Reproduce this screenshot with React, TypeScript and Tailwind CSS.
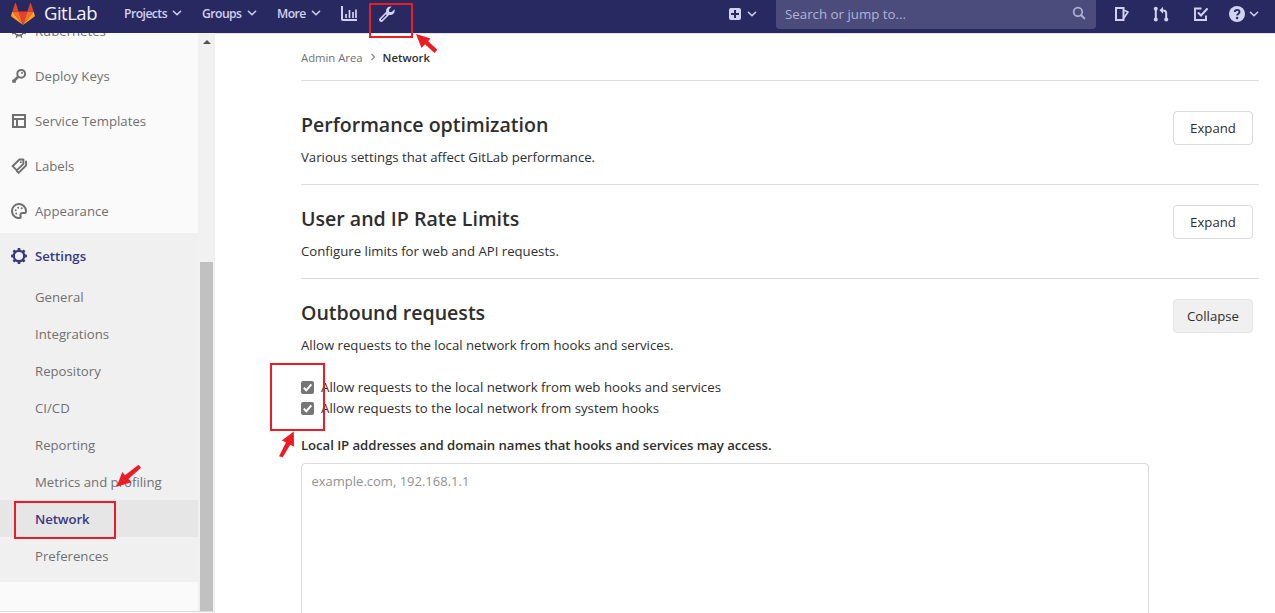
import type { ReactNode } from 'react';

type IconProps = { className?: string; size?: number; children: ReactNode };

function Icon({ className = '', size = 16, children }: IconProps) {
  return (
    <svg
      viewBox="0 0 16 16"
      width={size}
      height={size}
      fill="none"
      stroke="currentColor"
      strokeWidth="2"
      className={`block shrink-0 ${className}`}
    >
      {children}
    </svg>
  );
}

const Chevron = () => (
  <svg viewBox="0 0 10 8" width="10" height="8" className="block shrink-0" fill="none" stroke="currentColor" strokeWidth="1.5" strokeLinecap="round" strokeLinejoin="round">
    <path d="M1.4 2.2 5 5.8l3.6-3.6" />
  </svg>
);

const teeth = [0, 45, 90, 135, 180, 225, 270, 315];

const GearIcon = () => (
  <Icon>
    <circle cx="8" cy="8" r="5.2" strokeWidth="2.3" />
    {teeth.map((a) => (
      <rect key={a} x="6.6" y="0.1" width="2.8" height="2.6" rx="0.6" fill="currentColor" stroke="none" transform={`rotate(${a} 8 8)`} />
    ))}
  </Icon>
);

const WheelIcon = () => (
  <Icon>
    <circle cx="8" cy="8" r="4.5" strokeWidth="1.8" />
    <circle cx="8" cy="8" r="1.6" fill="currentColor" stroke="none" />
    {teeth.map((a) => (
      <path key={a} d="M8 .6v4" strokeWidth="1.4" transform={`rotate(${a + 22.5} 8 8)`} />
    ))}
  </Icon>
);

const KeyIcon = () => (
  <Icon>
    <circle cx="10.2" cy="5.8" r="3.9" />
    <path d="M7.2 8.8 2.4 13.4" strokeWidth="2.6" />
    <path d="M2.2 11.8v3M2 13.800h2.800" />
    <circle cx="11" cy="4.900" r="1" fill="currentColor" stroke="none" />
  </Icon>
);

const TemplateIcon = () => (
  <Icon>
    <path d="M2 2h12v12H2zM2 6h12M6 6v8" />
  </Icon>
);

const LabelsIcon = () => (
  <Icon>
    <path d="M8.400 1.500h4v4.300l-6.600 6.600-4.200-4.200zM15 2.800v4.700L7.600 14.900l-2.200-2.300" strokeWidth="1.900" strokeLinejoin="round" />
    <circle cx="9.800" cy="4.200" r="1" fill="currentColor" stroke="none" />
  </Icon>
);

const AppearanceIcon = () => (
  <Icon>
    <path d="M15 8A7 7 0 1 0 8.8 15c1 0 1-1 .7-1.800-.5-1.600.3-3.200 2-3.200H14c.7 0 1-1 1-2z" strokeWidth="2" />
    <g fill="currentColor" stroke="none">
      <circle cx="7.200" cy="4.700" r="1" />
      <circle cx="10.600" cy="5.300" r="1" />
      <circle cx="4.700" cy="7.300" r="1" />
      <circle cx="5.300" cy="10.400" r="1" />
    </g>
  </Icon>
);

const Tanuki = () => (
  <svg viewBox="0 0 24 24" width="24" height="24" className="block shrink-0">
    <path fill="#e24329" d="m12 23 4.400-13.500H7.600z" />
    <path fill="#fc6d26" d="M12 23 7.600 9.500H1.400zM12 23l4.400-13.500h6.200z" />
    <path fill="#fca326" d="M1.400 9.500.1 13.600c-.1.400 0 .8.300 1L12 23zM22.600 9.500l1.300 4.100c.1.400 0 .8-.3 1L12 23z" />
    <path fill="#e24329" d="M1.400 9.500h6.200L4.900 1.300c-.1-.4-.7-.4-.8 0zM22.600 9.500h-6.200l2.700-8.200c.1-.4.7-.4.8 0z" />
  </svg>
);

const navItems = [
  { label: 'Projects', cls: 'w-[78px]' },
  { label: 'Groups', cls: 'w-[75px]' },
  { label: 'More', cls: 'w-[63px]' },
];

function Navbar() {
  return (
    <header className="flex h-[33px] shrink-0 items-start bg-[#292961] text-[#d1d1f0]">
      <div className="flex h-[27px] w-full items-center">
        <div className="ml-[11px] flex w-[113px] items-center">
          <Tanuki />
          <span className="ml-[9px] text-[18.500px] leading-6 tracking-[-0.500px] text-[#f3f3fb] -mt-[2px]">GitLab</span>
        </div>
        {navItems.map((n) => (
          <button key={n.label} className={`flex items-center gap-[5px] text-[12.200px] font-semibold tracking-[-0.550px] ${n.cls}`}>
            <span className="pt-[2px]">{n.label}</span>
            <Chevron />
          </button>
        ))}
        <Icon className="ml-px">
          <path d="M1 0v13.200c0 .5.3.8.8.8H16" strokeWidth="2" />
          <path d="M5 8v4M8.500 4v8M12 6v6M15 3.500V12" strokeWidth="1.700" />
        </Icon>
        <Icon className="ml-[22px]">
          <path d="m2.300 13.700 6.200-6.200" strokeWidth="4.400" strokeLinecap="round" />
          <path d="m2.600 13.400 4.400-4.400" stroke="#292961" strokeWidth="1.100" strokeLinecap="round" />
          <path d="M12.600.6 10.100 3.300v2.600h2.600l2.900-2.700c.7 3.800-2 6.300-5.300 5.700L7.200 5.800C6.500 2.800 8.900-.1 12.600.6z" fill="currentColor" stroke="none" />
        </Icon>
        <div className="ml-[334px] flex items-center gap-[6px]">
          <svg viewBox="0 0 12 12" width="12" height="12" className="block">
            <rect width="12" height="12" rx="2" fill="currentColor" />
            <path d="M6 2v8M2 6h8" stroke="#292961" strokeWidth="2" />
          </svg>
          <Chevron />
        </div>
        <div className="-mb-[2px] ml-[19px] flex h-[29px] w-[320px] items-center justify-between self-end rounded-b bg-[#4b4b7c] pr-[10px] pl-[9px] text-[13.300px] text-[#b4b4d6]">
          <span>Search or jump to...</span>
          <Icon size={14} className="-mt-[3px] text-[#b1b1d3]">
            <circle cx="6.800" cy="6.800" r="4.900" />
            <path d="m10.500 10.500 3.600 3.600" strokeWidth="2.300" strokeLinecap="round" />
          </Icon>
        </div>
        <Icon className="ml-[18px]">
          <path d="M2 2h7.500v12H2z" />
          <path d="M10 4.300 14 6l-4.200 6" strokeWidth="1.700" strokeLinejoin="round" />
        </Icon>
        <Icon className="ml-[23px]">
          <path d="M2.800 3v10M13.200 13V7.500c0-2-1-3-3-3H8.500" />
          <path d="M10 .8v7L6.500 4.300z" fill="currentColor" stroke="none" />
          <g fill="currentColor" stroke="none">
            <circle cx="2.800" cy="2.800" r="2" />
            <circle cx="2.800" cy="13.400" r="2" />
            <circle cx="13.200" cy="13.400" r="2" />
          </g>
        </Icon>
        <Icon className="ml-[24px]">
          <path d="M8.500 2.500H2V14h11V9.500" strokeWidth="1.900" />
          <path d="m5.500 7 2.500 2.500 6-6.500" strokeLinecap="round" />
        </Icon>
        <svg viewBox="0 0 16 16" width="16" height="16" className="ml-[20px] block">
          <circle cx="8" cy="8" r="8" fill="currentColor" />
          <path d="M5.700 6.100c0-3 4.800-2.800 4.800 0 0 1.700-2.300 1.500-2.300 3.300" fill="none" stroke="#292961" strokeWidth="1.900" />
          <circle cx="8.100" cy="12" r="1.200" fill="#292961" />
        </svg>
        <div className="ml-[4px]">
          <Chevron />
        </div>
      </div>
    </header>
  );
}

const mainItems = [
  { label: 'Kubernetes', icon: <WheelIcon /> },
  { label: 'Deploy Keys', icon: <KeyIcon /> },
  { label: 'Service Templates', icon: <TemplateIcon /> },
  { label: 'Labels', icon: <LabelsIcon /> },
  { label: 'Appearance', icon: <AppearanceIcon /> },
];

const subItems = ['General', 'Integrations', 'Repository', 'CI/CD', 'Reporting', 'Metrics and profiling', 'Network', 'Preferences'];

function Sidebar() {
  return (
    <div className="flex h-[580px] w-[215px] shrink-0 overflow-hidden bg-[#fafafa]">
      <nav className="flex h-[579px] w-[198px] flex-col overflow-hidden border-b border-[#dbdbdb] text-[13.200px] text-[#707070]">
        <div className="-mt-[25px]">
          {mainItems.map((m) => (
            <a key={m.label} className="flex h-[45px] items-center gap-2 pl-[11px]">
              {m.icon}
              <span className="pt-[2px]">{m.label}</span>
            </a>
          ))}
        </div>
        <div className="h-[349px] shrink-0 bg-[#f0f0f0]">
          <a className="flex h-[45px] items-center gap-2 pl-[11px] font-semibold tracking-[0px] text-[#393982]">
            <GearIcon />
            <span className="pt-[2px]">Settings</span>
          </a>
          {subItems.map((s) => (
            <a
              key={s}
              className={
                s === 'Network'
                  ? 'flex h-[37px] items-center bg-[#e6e6e6] pt-[2px] pl-[35px] font-semibold tracking-[-0.100px] text-[#393982]'
                  : 'flex h-[37px] items-center pt-[2px] pl-[35px]'
              }
            >
              {s}
            </a>
          ))}
        </div>
      </nav>
      <div className="flex h-[579px] w-[17px] flex-col items-center border-b border-[#dbdbdb] bg-[#f1f1f1]">
        <svg viewBox="0 0 8 4" width="8" height="4" className="mt-[7px] block">
          <path d="M0 4 4 0l4 4z" fill="#505050" />
        </svg>
        <div className="mt-auto h-[349px] w-[13px] bg-[#c1c1c1]" />
      </div>
    </div>
  );
}

function SectionHeader({ title, text, action }: { title: string; text: string; action: 'Expand' | 'Collapse' }) {
  return (
    <div className="flex justify-between pr-[6px]">
      <div>
        <h4 className="text-[19.600px] leading-7 font-semibold tracking-[-0.020px]">{title}</h4>
        <p className="mt-2 text-[13.200px] leading-5">{text}</p>
      </div>
      <button
        className={
          action === 'Collapse'
            ? 'h-[34px] w-[80px] rounded border border-[#e3e3e3] bg-[#f0f0f0] pt-[2px] text-[13.200px]'
            : 'h-[34px] w-[80px] rounded border border-[#dbdbdb] bg-white pt-[2px] text-[13.200px]'
        }
      >
        {action}
      </button>
    </div>
  );
}

function Check({ label }: { label: string }) {
  return (
    <label className="flex h-[21px] items-center gap-[7px] text-[13.250px]">
      <svg viewBox="0 0 13 13" width="13" height="13" className="block">
        <rect width="13" height="13" rx="2" fill="#767676" />
        <path d="m2.800 6.800 2.500 2.500 5-6" fill="none" stroke="#fff" strokeWidth="2" />
      </svg>
      {label}
    </label>
  );
}

function Annotations() {
  return (
    <>
      <div className="absolute top-[3px] left-[369px] h-[35px] w-[44px] border-2 border-[#ed1c24]" />
      <div className="absolute top-[363px] left-[270px] h-[68px] w-[55px] border-2 border-[#ed1c24]" />
      <div className="absolute top-[501px] left-[14px] h-[38px] w-[102px] border-2 border-[#ed1c24]" />
      <svg viewBox="0 0 24 22" width="24" height="22" className="absolute top-[33px] left-[415px]">
        <path d="M1 1 15.500 5.500 13.200 8.200 22.300 16.800 19.500 20 10 11.300 6.500 15z" fill="#ed1c24" />
      </svg>
      <svg viewBox="0 0 18 28" width="18" height="28" className="absolute top-[431px] left-[278px]">
        <path d="M15.800.5 16 15.800 12.200 13.700 4.800 26.200 1 25.200 8 11.300 3.800 9.500z" fill="#ed1c24" />
      </svg>
      <svg viewBox="0 0 26 24" width="26" height="24" className="absolute top-[464px] left-[116px]">
        <path d="M.5 22.800 6.300 8 9 11.200 22.500.8 25 3.700 12.500 15 15.500 18.300z" fill="#ed1c24" />
      </svg>
    </>
  );
}

export default function App() {
  return (
    <div className="relative flex h-[613px] w-[1275px] flex-col overflow-hidden bg-white font-['Open_Sans',sans-serif] text-[#2e2e2e]">
      <Navbar />
      <div className="flex min-h-0 flex-1">
        <Sidebar />
        <main className="flex-1 overflow-hidden border-t border-[#e3e3ec] pr-[16px] pl-[86px]">
          <div className="flex h-[47px] items-center border-b border-[#dbdbdb] text-[11.300px]">
            <span className="pt-[2px] text-[#707070]">Admin Area</span>
            <svg viewBox="0 0 6 8" width="6" height="8" className="mx-[7px] block" fill="none" stroke="#8a8a8a" strokeWidth="1.200">
              <path d="m1.500 1 3 3-3 3" />
            </svg>
            <span className="pt-[2px] font-semibold">Network</span>
          </div>
          <section className="h-[104px] border-b border-[#dbdbdb] pt-[30px]">
            <SectionHeader title="Performance optimization" text="Various settings that affect GitLab performance." action="Expand" />
          </section>
          <section className="h-[94px] border-b border-[#dbdbdb] pt-5">
            <SectionHeader title="User and IP Rate Limits" text="Configure limits for web and API requests." action="Expand" />
          </section>
          <section className="pt-5">
            <SectionHeader title="Outbound requests" text="Allow requests to the local network from hooks and services." action="Collapse" />
            <div className="mt-[22px]">
              <Check label="Allow requests to the local network from web hooks and services" />
              <Check label="Allow requests to the local network from system hooks" />
            </div>
            <p className="mt-4 text-[13.200px] leading-5 font-semibold tracking-[-0.060px]">Local IP addresses and domain names that hooks and services may access.</p>
            <div className="mt-2 h-[180px] w-[848px] rounded border border-[#dbdbdb] px-[9.500px] pt-[7px] text-[13px] leading-5 text-[#919191]">
              example.com, 192.168.1.1
            </div>
          </section>
        </main>
      </div>
      <Annotations />
    </div>
  );
}
